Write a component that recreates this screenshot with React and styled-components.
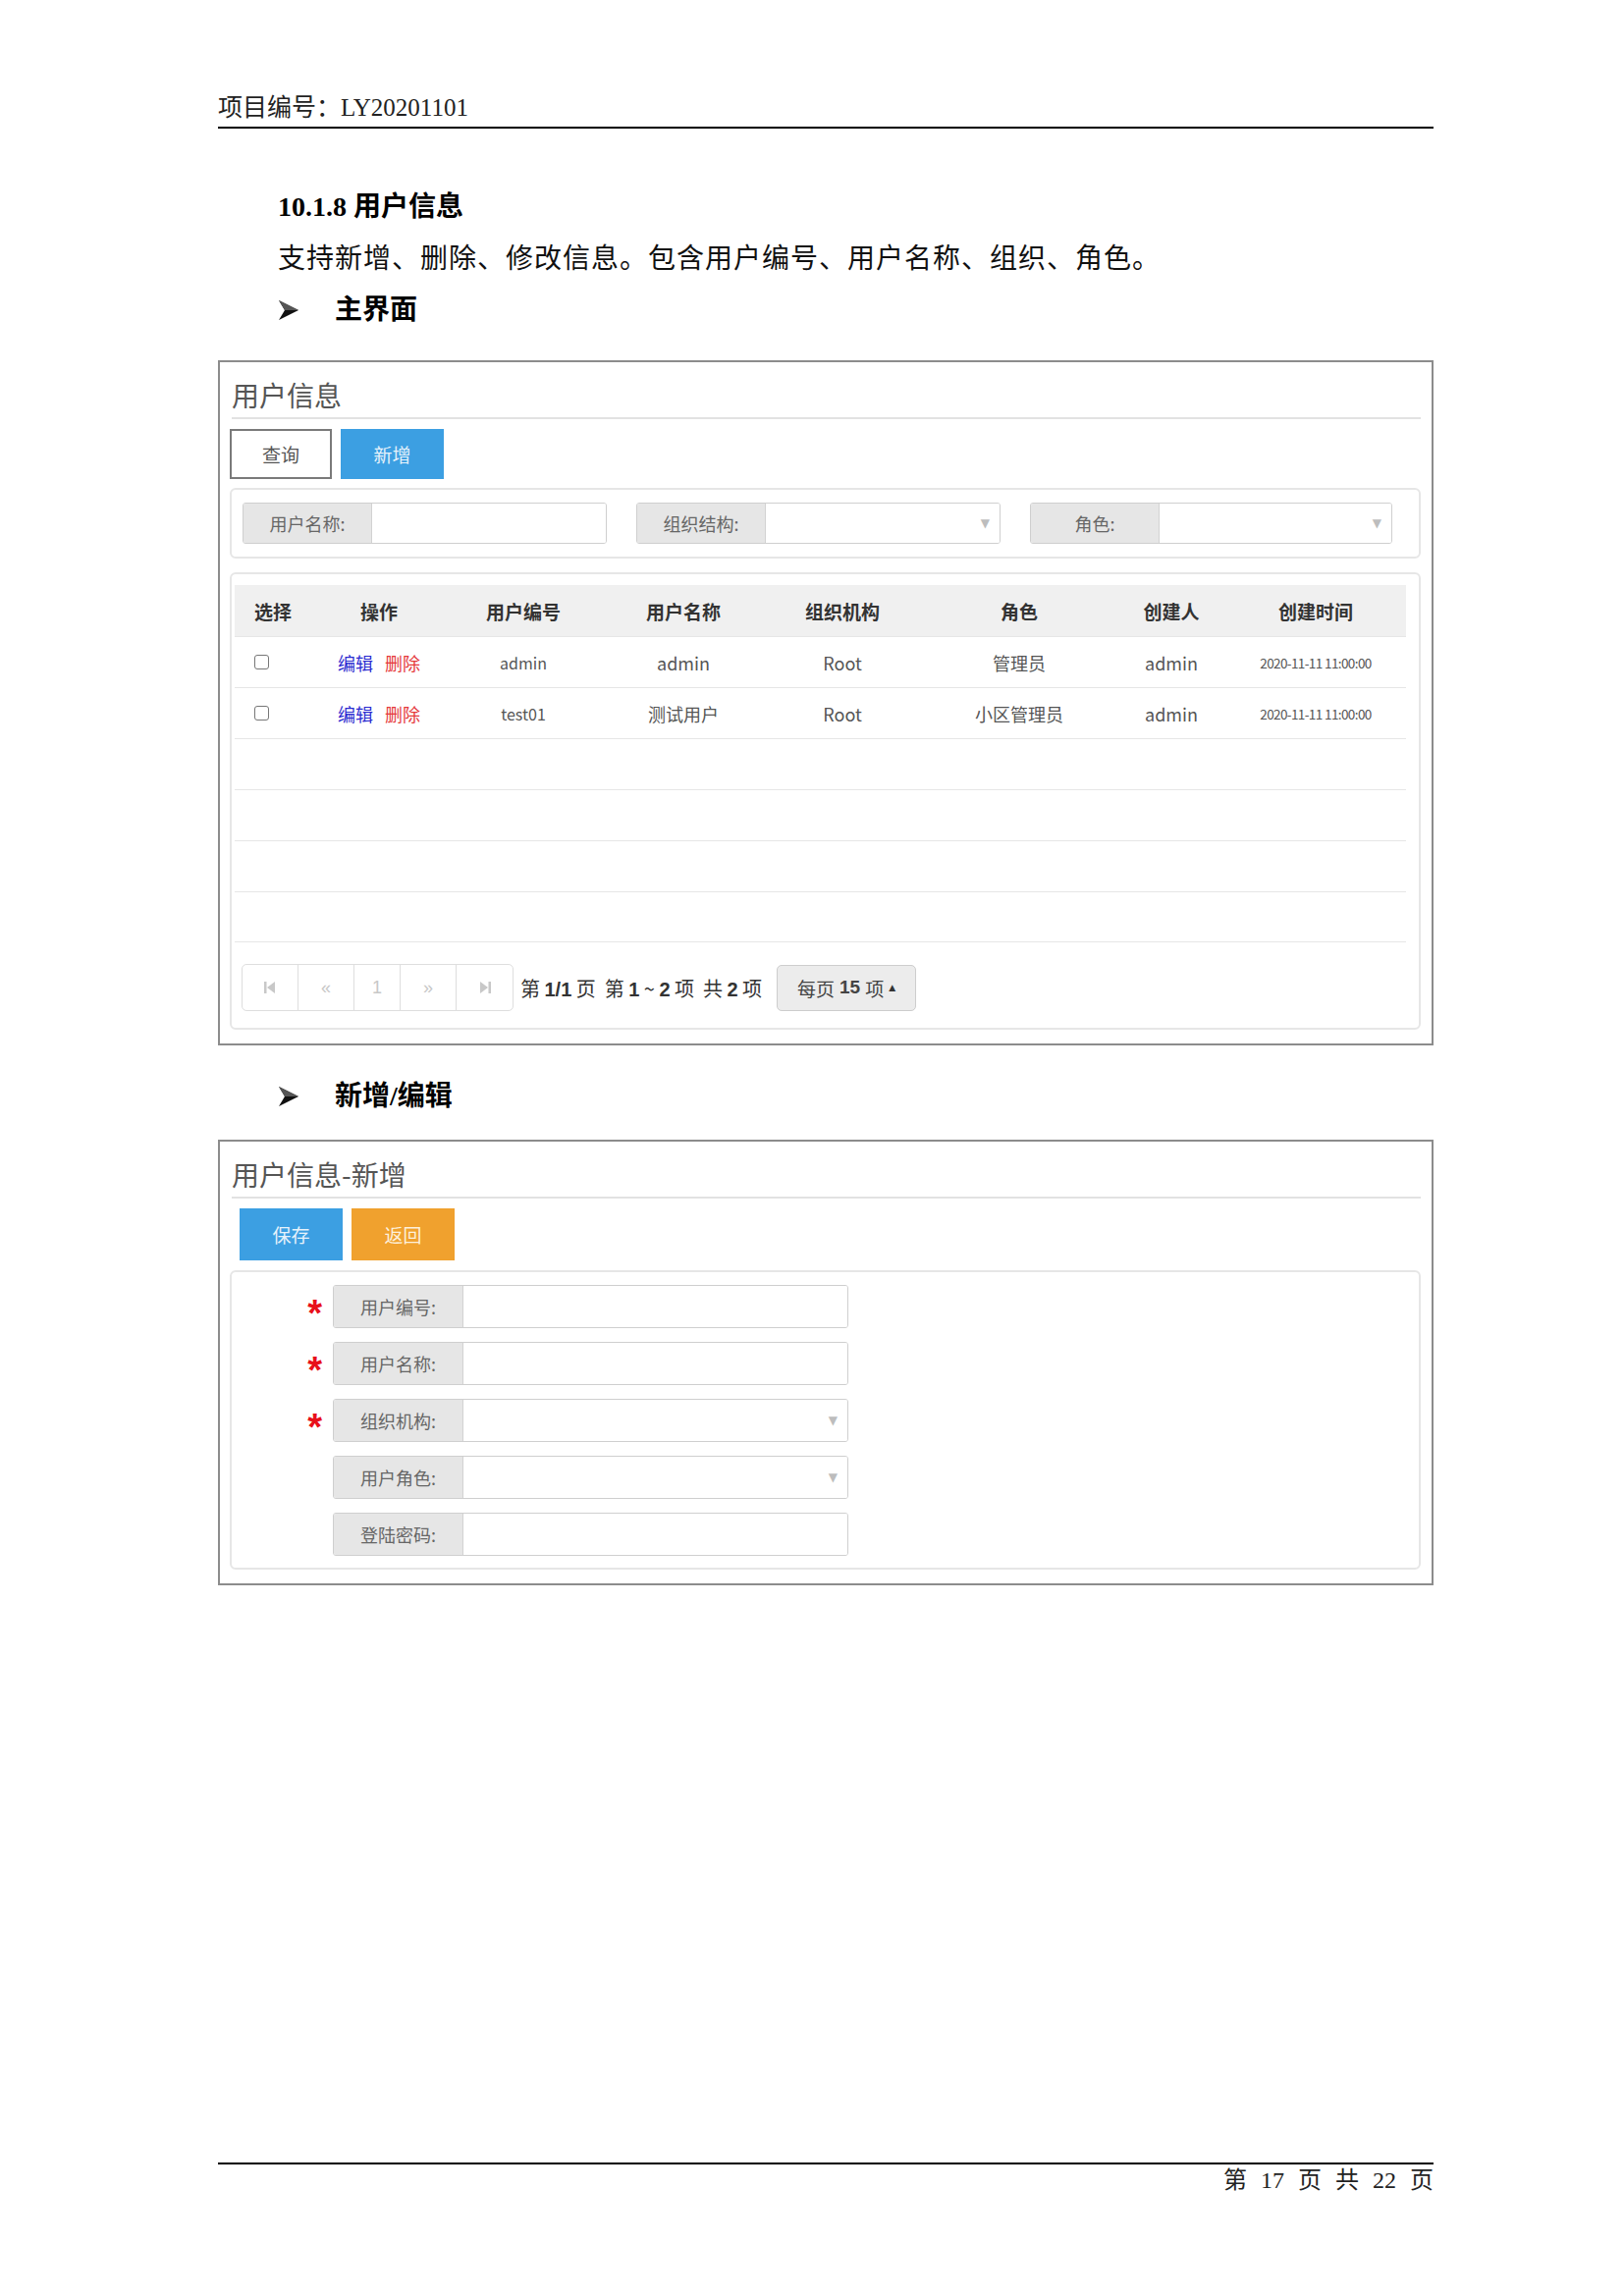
import React from "react";
import styled, { createGlobalStyle } from "styled-components";

const GlobalStyle = createGlobalStyle`
  html, body { margin: 0; padding: 0; background: #fff; }
  body { font-family: "Liberation Serif", "Noto Sans CJK SC", serif; color: #000; }
`;

const UI_FONT = `"Noto Sans CJK SC", "Liberation Sans", sans-serif`;

const rows = [
  { no: "admin", name: "admin", org: "Root", role: "管理员", creator: "admin", time: "2020-11-11 11:00:00" },
  { no: "test01", name: "测试用户", org: "Root", role: "小区管理员", creator: "admin", time: "2020-11-11 11:00:00" },
];

const formFields = [
  { label: "用户编号:", required: true },
  { label: "用户名称:", required: true },
  { label: "组织机构:", required: true, select: true },
  { label: "用户角色:", select: true },
  { label: "登陆密码:" },
];

function FirstIcon() {
  return (
    <svg width="12" height="14" viewBox="0 0 12 14">
      <rect x="0" y="1" width="2.5" height="12" fill="#c8c8c8" />
      <path d="M11 1 L3 7 L11 13 Z" fill="#c8c8c8" />
    </svg>
  );
}

function LastIcon() {
  return (
    <svg width="12" height="14" viewBox="0 0 12 14">
      <path d="M1 1 L9 7 L1 13 Z" fill="#c8c8c8" />
      <rect x="9.5" y="1" width="2.5" height="12" fill="#c8c8c8" />
    </svg>
  );
}

function BulletArrow() {
  return (
    <svg width="22" height="22" viewBox="0 0 22 22">
      <path d="M1 1 L21 11 L1 21 L7 11 Z" fill="#111" />
      <path d="M1 1 L21 11 L7 11 Z" fill="#555" />
    </svg>
  );
}

function App() {
  return (
    <>
      <GlobalStyle />
      <Page>
        <DocHeader>项目编号：LY20201101</DocHeader>

        <SectionTitle>10.1.8 用户信息</SectionTitle>
        <Paragraph>支持新增、删除、修改信息。包含用户编号、用户名称、组织、角色。</Paragraph>
        <Bullet>
          <Arrow><BulletArrow /></Arrow>
          主界面
        </Bullet>

        <Panel>
          <PanelTitle>用户信息</PanelTitle>
          <Toolbar>
            <Btn $variant="outline">查询</Btn>
            <Btn $variant="blue">新增</Btn>
          </Toolbar>
          <FilterBox>
            <InputGroup $width={371}>
              <InputLabel>用户名称:</InputLabel>
              <InputField />
            </InputGroup>
            <InputGroup $width={371}>
              <InputLabel>组织结构:</InputLabel>
              <InputField>
                <Caret>▼</Caret>
              </InputField>
            </InputGroup>
            <InputGroup $width={369}>
              <InputLabel>角色:</InputLabel>
              <InputField>
                <Caret>▼</Caret>
              </InputField>
            </InputGroup>
          </FilterBox>

          <TableBox>
            <Table>
              <HeadRow>
                <HeadCell $left>选择</HeadCell>
                <HeadCell>操作</HeadCell>
                <HeadCell>用户编号</HeadCell>
                <HeadCell>用户名称</HeadCell>
                <HeadCell>组织机构</HeadCell>
                <HeadCell>角色</HeadCell>
                <HeadCell>创建人</HeadCell>
                <HeadCell>创建时间</HeadCell>
              </HeadRow>
              {rows.map((r) => (
                <BodyRow key={r.no}>
                  <Cell $left>
                    <CheckBox />
                  </Cell>
                  <Cell>
                    <LinkText $color="#2b2bd0">编辑</LinkText>
                    <LinkText $color="#e5393b">删除</LinkText>
                  </Cell>
                  <Cell $size={16}>{r.no}</Cell>
                  <Cell>{r.name}</Cell>
                  <Cell>{r.org}</Cell>
                  <Cell>{r.role}</Cell>
                  <Cell>{r.creator}</Cell>
                  <Cell $size={13.5} $tight>{r.time}</Cell>
                </BodyRow>
              ))}
              {[0, 1, 2, 3].map((i) => (
                <BodyRow key={"empty" + i} />
              ))}
            </Table>

            <PagerRow>
              <Pager>
                <PageBtn $w={57}><FirstIcon /></PageBtn>
                <PageBtn $w={57}>«</PageBtn>
                <PageBtn $w={47}>1</PageBtn>
                <PageBtn $w={57}>»</PageBtn>
                <PageBtn $w={57} $last><LastIcon /></PageBtn>
              </Pager>
              <PageInfo>
                第 <b>1/1</b> 页 &nbsp;第 <b>1</b> ~ <b>2</b> 项 &nbsp;共 <b>2</b> 项
              </PageInfo>
              <PageSize>
                每页 <b>15</b> 项 <SmallUp>▲</SmallUp>
              </PageSize>
            </PagerRow>
          </TableBox>
        </Panel>

        <Bullet $gap={34}>
          <Arrow><BulletArrow /></Arrow>
          新增/编辑
        </Bullet>

        <Panel $top={26}>
          <PanelTitle>用户信息-新增</PanelTitle>
          <Toolbar $indent={10} $height={53}>
            <Btn $variant="blue">保存</Btn>
            <Btn $variant="orange">返回</Btn>
          </Toolbar>
          <FormBox>
            {formFields.map((f) => (
              <FormRow key={f.label}>
                <Star>{f.required ? "*" : ""}</Star>
                <InputGroup $width={525} $height={44}>
                  <InputLabel $width={131}>{f.label}</InputLabel>
                  <InputField>{f.select && <Caret>▼</Caret>}</InputField>
                </InputGroup>
              </FormRow>
            ))}
          </FormBox>
        </Panel>

        <DocFooter>第 17 页 共 22 页</DocFooter>
      </Page>
    </>
  );
}

export default App;

const Page = styled.div`
  width: 1654px;
  min-height: 2339px;
  box-sizing: border-box;
  padding: 94px 194px 102px 222px;
  display: flex;
  flex-direction: column;
`;

const DocHeader = styled.div`
  font-size: 25px;
  line-height: 32px;
  color: #222;
  padding-bottom: 3px;
  border-bottom: 2.5px solid #000;
`;

const SectionTitle = styled.div`
  margin: 62px 0 0 61px;
  font-size: 28px;
  line-height: 36px;
  font-weight: bold;
`;

const Paragraph = styled.div`
  margin: 17px 0 0 61px;
  font-size: 28px;
  line-height: 36px;
  letter-spacing: 1px;
  color: #111;
`;

const Bullet = styled.div`
  margin: ${(p) => p.$gap || 16}px 0 0 61px;
  display: flex;
  align-items: center;
  font-size: 28px;
  line-height: 36px;
  font-weight: bold;
`;

const Arrow = styled.span`
  width: 58px;
  display: flex;
  align-items: center;
`;

const Panel = styled.div`
  margin-top: ${(p) => p.$top || 33}px;
  border: 2px solid #8c8c8c;
  padding: 0 11px 14px 10px;
  font-family: ${UI_FONT};
`;

const PanelTitle = styled.div`
  margin-left: 2px;
  padding: 15px 0 5px;
  font-size: 28px;
  line-height: 36px;
  color: #555;
  border-bottom: 2px solid #e2e2e2;
`;

const Toolbar = styled.div`
  margin: 10px 0 0 ${(p) => p.$indent || 0}px;
  display: flex;
  gap: 9px;
  height: ${(p) => p.$height || 51}px;
`;

const Btn = styled.div`
  width: 105px;
  box-sizing: border-box;
  display: flex;
  align-items: center;
  justify-content: center;
  font-size: 19px;
  ${(p) =>
    p.$variant === "outline" &&
    `background:#fff; border:2px solid #7a7a7a; color:#555; width:104px;`}
  ${(p) => p.$variant === "blue" && `background:#3c9fe2; color:#e6f2fb;`}
  ${(p) => p.$variant === "orange" && `background:#f0a12e; color:#fdf0dc;`}
`;

const FilterBox = styled.div`
  margin-top: 9px;
  border: 2px solid #e6e6e6;
  border-radius: 6px;
  padding: 13px 11px;
  display: flex;
  gap: 30px;
`;

const InputGroup = styled.div`
  width: ${(p) => p.$width}px;
  height: ${(p) => p.$height || 42}px;
  box-sizing: border-box;
  border: 1.5px solid #cfcfcf;
  border-radius: 3px;
  display: flex;
  overflow: hidden;
`;

const InputLabel = styled.div`
  width: ${(p) => p.$width || 130}px;
  flex: none;
  background: #e6e6e6;
  border-right: 1px solid #d2d2d2;
  color: #666;
  font-size: 18px;
  display: flex;
  align-items: center;
  justify-content: center;
`;

const InputField = styled.div`
  flex: 1;
  background: #fff;
  display: flex;
  align-items: center;
  justify-content: flex-end;
  padding-right: 10px;
`;

const Caret = styled.span`
  color: #bdbdbd;
  font-size: 12px;
  font-family: "DejaVu Sans", sans-serif;
`;

const TableBox = styled.div`
  margin-top: 14px;
  border: 2px solid #e6e6e6;
  border-radius: 6px;
  padding: 11px 13px 17px 3px;
`;

const Table = styled.div`
  display: flex;
  flex-direction: column;
`;

const columns = "80px 134px 160px 166px 158px 202px 108px 186px";

const HeadRow = styled.div`
  display: grid;
  grid-template-columns: ${columns};
  height: 52px;
  background: #f0f0f0;
`;

const HeadCell = styled.div`
  display: flex;
  align-items: center;
  justify-content: ${(p) => (p.$left ? "flex-start" : "center")};
  padding-left: ${(p) => (p.$left ? "20px" : "0")};
  font-size: 19px;
  font-weight: bold;
  color: #333;
`;

const BodyRow = styled.div`
  display: grid;
  grid-template-columns: ${columns};
  height: 52px;
  box-sizing: border-box;
  border-top: 1.5px solid #e6e6e6;
  &:last-child {
    border-bottom: 1.5px solid #e6e6e6;
  }
`;

const Cell = styled.div`
  display: flex;
  align-items: center;
  justify-content: ${(p) => (p.$left ? "flex-start" : "center")};
  padding-left: ${(p) => (p.$left ? "20px" : "0")};
  gap: 12px;
  font-size: ${(p) => p.$size || 18}px;
  letter-spacing: ${(p) => (p.$tight ? "-0.6px" : "0")};
  color: #555;
  font-family: "Noto Sans CJK SC", "Open Sans", sans-serif;
`;

const CheckBox = styled.span`
  width: 15px;
  height: 15px;
  box-sizing: border-box;
  border: 1.5px solid #777;
  border-radius: 3px;
  background: #fff;
`;

const LinkText = styled.span`
  color: ${(p) => p.$color};
  font-size: 18px;
`;

const PagerRow = styled.div`
  margin: 22px 0 0 7px;
  display: flex;
  align-items: center;
`;

const Pager = styled.div`
  display: flex;
  height: 48px;
  border: 1.5px solid #dedede;
  border-radius: 5px;
  box-sizing: border-box;
`;

const PageBtn = styled.div`
  width: ${(p) => p.$w}px;
  box-sizing: border-box;
  border-right: ${(p) => (p.$last ? "none" : "1.5px solid #dedede")};
  display: flex;
  align-items: center;
  justify-content: center;
  color: #c8c8c8;
  font-size: 18px;
  font-family: "Liberation Sans", sans-serif;
`;

const PageInfo = styled.div`
  margin-left: 7px;
  font-size: 20px;
  color: #333;
  white-space: nowrap;
  b {
    font-family: "Liberation Sans", sans-serif;
  }
`;

const PageSize = styled.div`
  margin-left: 15px;
  width: 142px;
  height: 47px;
  box-sizing: border-box;
  background: #ececec;
  border: 1.5px solid #cdcdcd;
  border-radius: 5px;
  display: flex;
  align-items: center;
  justify-content: center;
  gap: 5px;
  font-size: 19px;
  color: #444;
  b {
    font-family: "Liberation Sans", sans-serif;
  }
`;

const SmallUp = styled.span`
  font-size: 9px;
  font-family: "DejaVu Sans", sans-serif;
  color: #333;
`;

const FormBox = styled.div`
  margin-top: 10px;
  border: 2px solid #e6e6e6;
  border-radius: 6px;
  padding: 13px 0 12px;
  display: flex;
  flex-direction: column;
  gap: 14px;
`;

const FormRow = styled.div`
  display: flex;
  align-items: center;
`;

const Star = styled.div`
  width: 103px;
  box-sizing: border-box;
  padding-right: 11px;
  text-align: right;
  color: #e8101a;
  font-size: 38px;
  font-weight: bold;
  font-family: "Liberation Sans", sans-serif;
  line-height: 30px;
  padding-top: 14px;
`;

const DocFooter = styled.div`
  margin-top: auto;
  border-top: 2.5px solid #000;
  text-align: right;
  font-size: 24px;
  line-height: 32px;
  word-spacing: 8px;
  color: #222;
`;
